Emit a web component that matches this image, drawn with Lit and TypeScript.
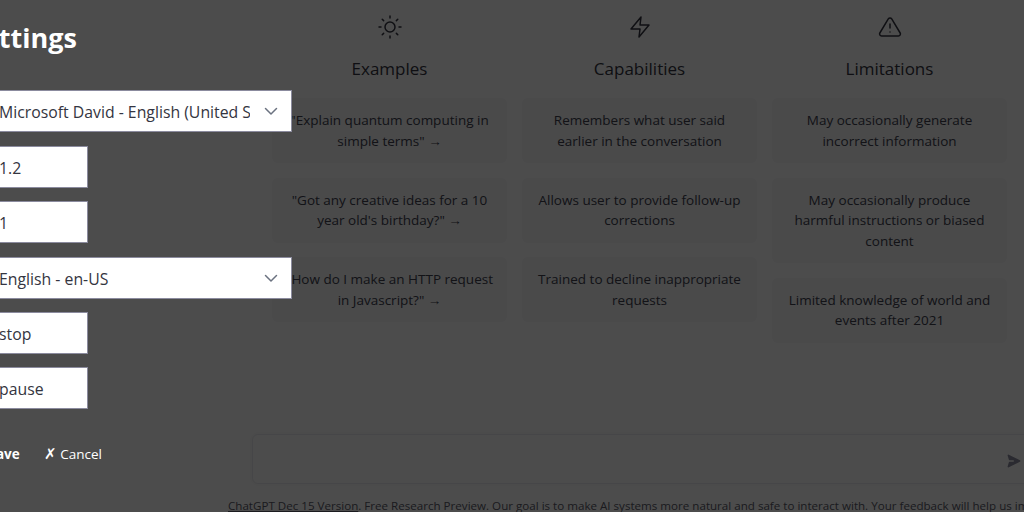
import { LitElement, html, css, svg } from 'lit';
import { customElement } from 'lit/decorators.js';

const columns = [
  {
    title: 'Examples',
    icon: svg`<circle cx="12" cy="12" r="5"></circle><path d="M12 1v2M12 21v2M4.22 4.22l1.42 1.42M18.36 18.36l1.42 1.42M1 12h2M21 12h2M4.22 19.78l1.42-1.42M18.36 5.64l1.42-1.42"></path>`,
    cards: [
      '"Explain quantum computing in simple terms" →',
      '"Got any creative ideas for a 10 year old\'s birthday?" →',
      '"How do I make an HTTP request in Javascript?" →',
    ],
  },
  {
    title: 'Capabilities',
    icon: svg`<polygon points="13 2 3 14 12 14 11 22 21 10 12 10 13 2"></polygon>`,
    cards: [
      'Remembers what user said earlier in the conversation',
      'Allows user to provide follow-up corrections',
      'Trained to decline inappropriate requests',
    ],
  },
  {
    title: 'Limitations',
    icon: svg`<path d="M10.29 3.86L1.82 18a2 2 0 0 0 1.71 3h16.94a2 2 0 0 0 1.71-3L13.71 3.86a2 2 0 0 0-3.42 0z"></path><path d="M12 9v4M12 17h.01"></path>`,
    cards: [
      'May occasionally generate incorrect information',
      'May occasionally produce harmful instructions or biased content',
      'Limited knowledge of world and events after 2021',
    ],
  },
];

@customElement('app-root')
export class AppRoot extends LitElement {
  static styles = css`
    :host {
      display: block;
      position: relative;
      width: 1024px;
      height: 512px;
      overflow: hidden;
      background: #fff;
      color: #343541;
      font-family: 'Open Sans', 'Noto Sans', sans-serif;
    }

    .page {
      display: flex;
      flex-direction: column;
      height: 512px;
      padding-left: 252px;
      box-sizing: border-box;
    }

    .columns {
      flex: none;
      display: grid;
      grid-template-columns: repeat(3, 235px);
      gap: 15px;
      padding: 15px 0 0 20px;
      height: 434px;
      box-sizing: border-box;
    }
    .col {
      display: flex;
      flex-direction: column;
      align-items: center;
    }
    .col svg {
      width: 24px;
      height: 24px;
      fill: none;
      stroke: currentColor;
      stroke-width: 1.5;
      stroke-linecap: round;
      stroke-linejoin: round;
    }
    .col h2 {
      margin: 16px 0 16px;
      font-size: 17px;
      line-height: 27px;
      font-weight: 400;
    }
    .card {
      width: 100%;
      box-sizing: border-box;
      padding: 12px;
      margin-bottom: 14.5px;
      border-radius: 6px;
      background: #f7f7f8;
      color: #40414f;
      font-size: 13.5px;
      line-height: 20.5px;
      text-align: center;
    }

    .prompt {
      flex: none;
      display: flex;
      align-items: flex-end;
      justify-content: flex-end;
      width: 800px;
      height: 50px;
      box-sizing: border-box;
      padding: 0 29px 14px 0;
      border: 1px solid #ececf1;
      border-radius: 6px;
      background: #fff;
      box-shadow: 0 0 6px rgba(0, 0, 0, 0.05);
    }
    .prompt svg {
      width: 16px;
      height: 16px;
      fill: #8e8ea0;
      transform: rotate(90deg);
    }
    .note {
      margin: 14px 0 0 -24px;
      font-size: 11.6px;
      line-height: 16px;
      white-space: nowrap;
      color: #5a5b68;
    }
    .note a {
      color: inherit;
      text-decoration: underline;
    }

    .backdrop {
      position: absolute;
      inset: 0;
      background: rgba(0, 0, 0, 0.7);
    }

    .dialog {
      position: absolute;
      top: 0;
      left: -40px;
      display: flex;
      flex-direction: column;
      align-items: flex-start;
      gap: 13.4px;
    }
    .dialog h1 {
      margin: 19px 0 20px 8px;
      font-size: 27px;
      line-height: 38px;
      font-weight: 700;
      color: #fff;
    }
    .field {
      position: relative;
      height: 42px;
      box-sizing: border-box;
      padding: 2px 8px 0 38px;
      border: 1px solid #8b8b9e;
      border-radius: 0;
      background: #fff;
      color: #343541;
      font: 400 15.8px 'Open Sans', 'Noto Sans', sans-serif;
      outline: none;
    }
    .short {
      width: 127.5px;
    }
    .picker {
      position: relative;
      display: flex;
    }
    .picker select {
      width: 332px;
      padding-right: 41px;
      appearance: none;
    }
    .picker svg {
      position: absolute;
      top: 14px;
      right: 14px;
      width: 14px;
      height: 14px;
      fill: none;
      stroke: #6b7280;
      stroke-width: 1.5;
      stroke-linecap: round;
      stroke-linejoin: round;
      pointer-events: none;
    }
    .actions {
      display: flex;
      gap: 24px;
      margin: 21px 0 0 12px;
      color: #fff;
      font-size: 13.5px;
      line-height: 20px;
    }
    .actions b {
      font-weight: 700;
    }
    .mark {
      font-size: 14.5px;
      font-weight: 400;
    }
  `;

  private chevron() {
    return html`<svg viewBox="0 0 14 14"><path d="M1.5 4.5L7 10l5.5-5.5"></path></svg>`;
  }

  render() {
    return html`
      <div class="page">
        <div class="columns">
          ${columns.map(
            (c) => html`
              <div class="col">
                <svg viewBox="0 0 24 24">${c.icon}</svg>
                <h2>${c.title}</h2>
                ${c.cards.map((t) => html`<div class="card">${t}</div>`)}
              </div>
            `
          )}
        </div>
        <div class="prompt">
          <svg viewBox="0 0 20 20">
            <path d="M10.894 2.553a1 1 0 00-1.788 0l-7 14a1 1 0 001.169 1.409l5-1.429A1 1 0 009 15.571V11a1 1 0 112 0v4.571a1 1 0 00.725.962l5 1.428a1 1 0 001.17-1.408l-7-14z"></path>
          </svg>
        </div>
        <div class="note">
          <a href="#">ChatGPT Dec 15 Version</a>. Free Research Preview. Our goal is to make AI systems more natural and safe to interact with. Your feedback will help us improve.
        </div>
      </div>
      <div class="backdrop"></div>
      <div class="dialog">
        <h1>Settings</h1>
        <div class="picker">
          <select class="field"><option>Microsoft David - English (United States)</option></select>
          ${this.chevron()}
        </div>
        <input class="field short" value="1.2" />
        <input class="field short" value="1" />
        <div class="picker">
          <select class="field"><option>English - en-US</option></select>
          ${this.chevron()}
        </div>
        <input class="field short" value="stop" />
        <input class="field short" value="pause" />
        <div class="actions">
          <b><span class="mark">✓</span> Save</b>
          <span><span class="mark">✗</span> Cancel</span>
        </div>
      </div>
    `;
  }
}
